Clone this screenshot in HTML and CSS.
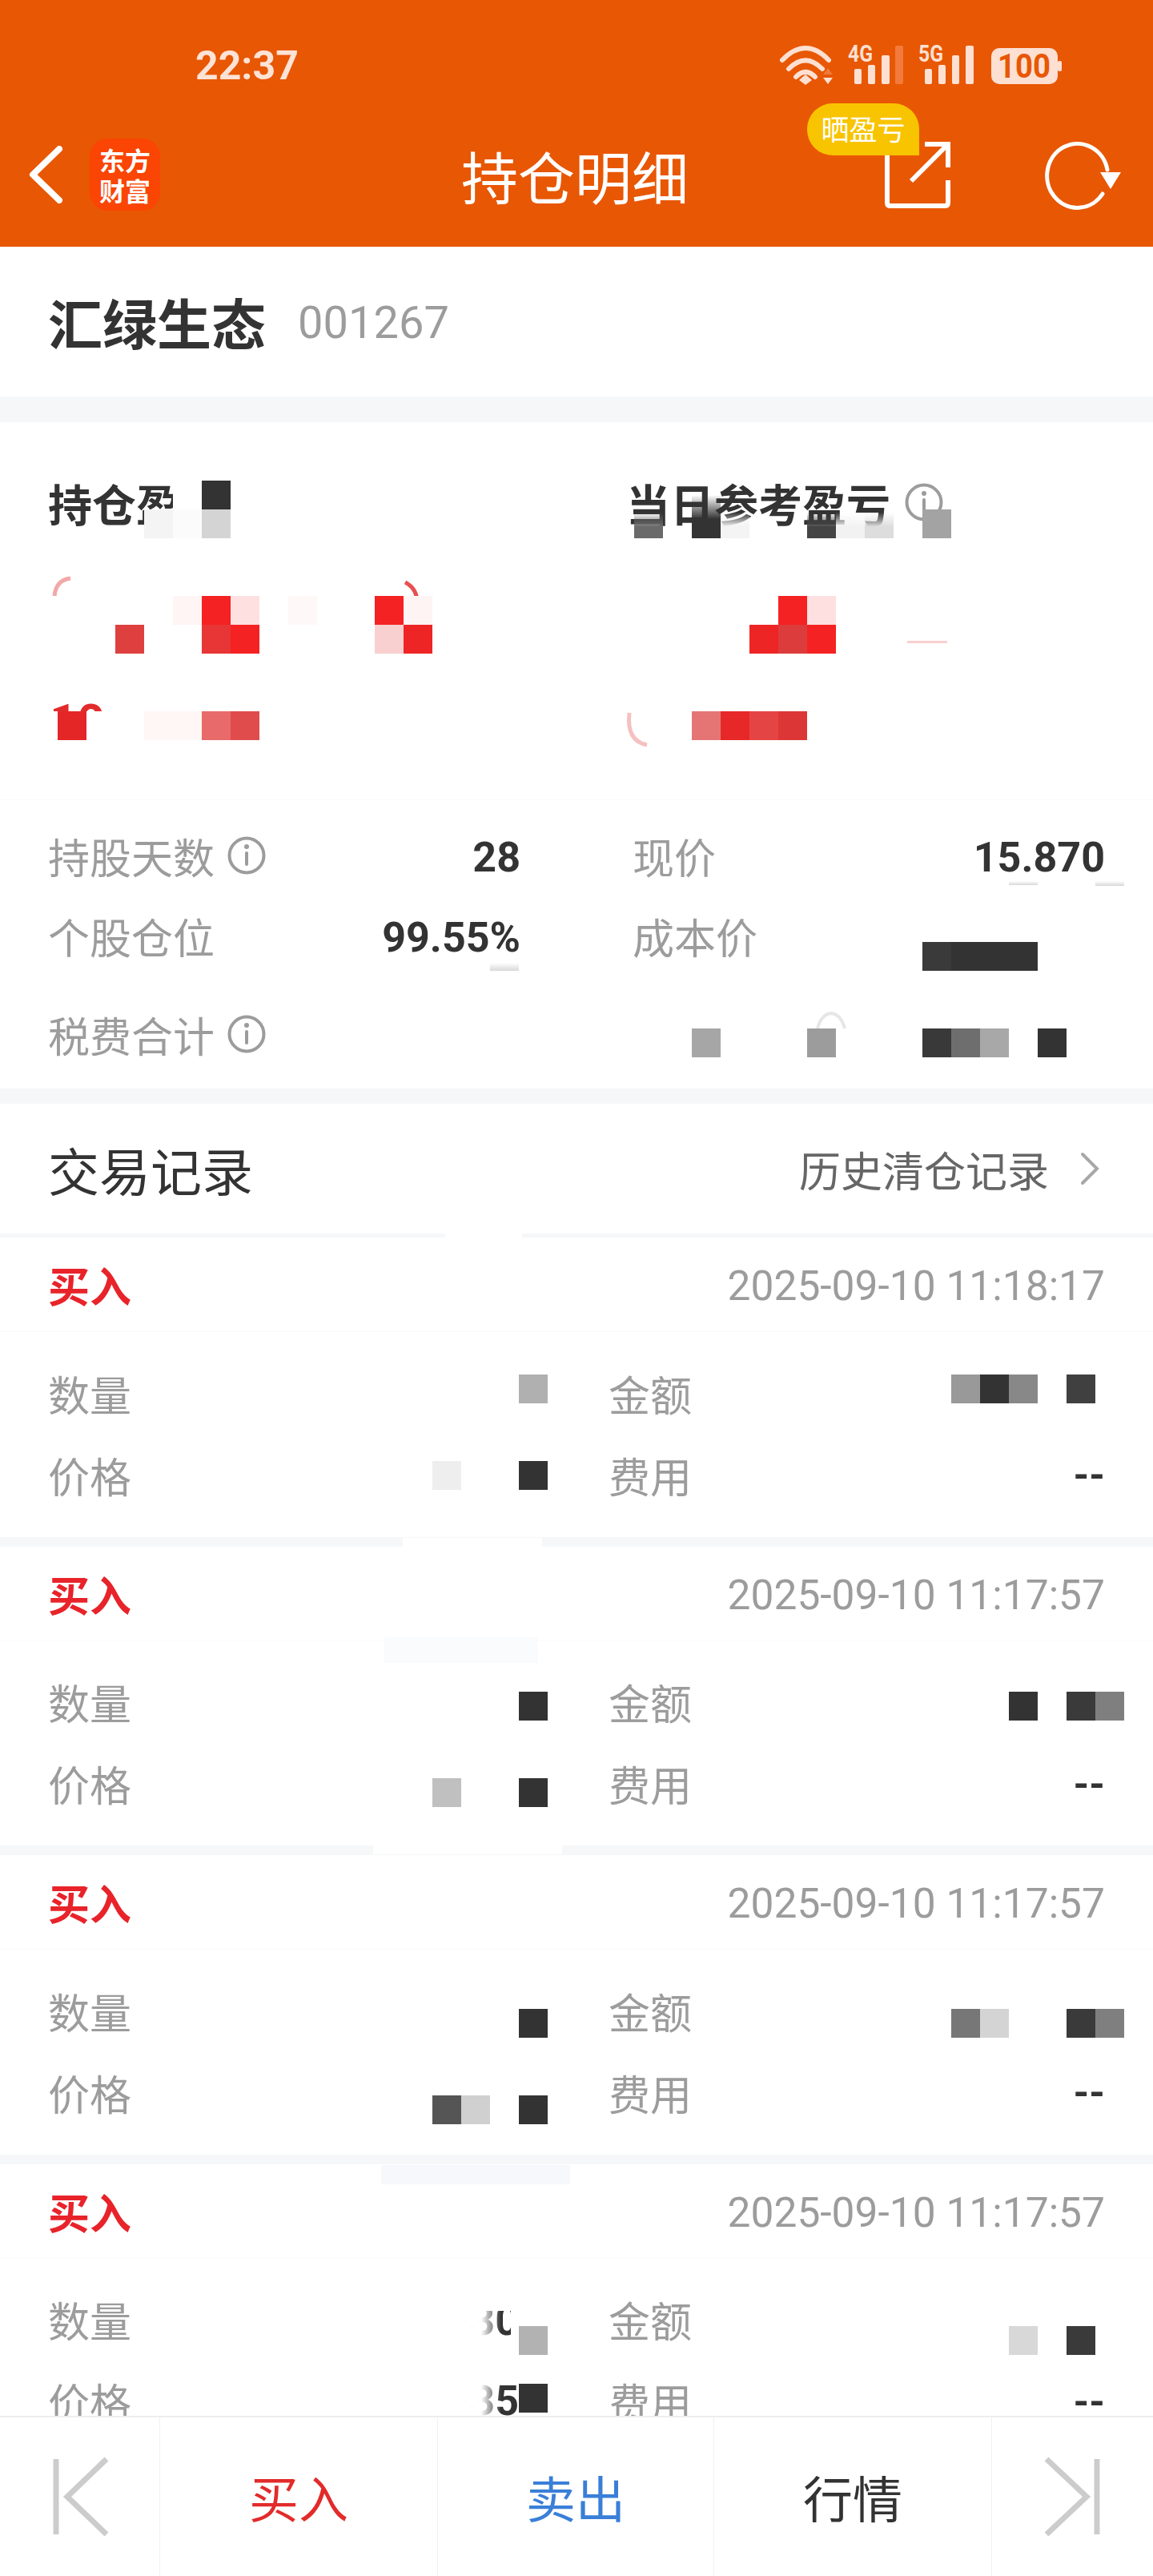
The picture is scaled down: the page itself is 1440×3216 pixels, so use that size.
FILE: index.html
```html
<!DOCTYPE html>
<html lang="zh">
<head>
<meta charset="UTF-8">
<meta name="viewport" content="width=device-width, initial-scale=1.0">
<title>持仓明细</title>
<link rel="stylesheet" href="styles.css">
</head>
<body>
<svg class="defs" width="0" height="0">
<symbol id="info" viewBox="0 0 48 48">
<circle cx="24" cy="24" r="21.5" fill="none" stroke="#9c9c9c" stroke-width="4"/>
<circle cx="24" cy="13" r="3" fill="#9c9c9c"/>
<path d="M24 21V35" stroke="#9c9c9c" stroke-width="4" stroke-linecap="round"/>
</symbol>
</svg>

<div class="phone">
<header class="topbar">
<div class="status">
<span class="time">22:37</span>
<svg class="status-icons" width="354" height="50" viewBox="0 0 354 50">
<g fill="none" stroke="#fde0d2" stroke-width="6" stroke-linecap="round">
<path d="M5 18Q34 -12 63 18"/>
<path d="M13 29Q34 8 55 29"/>
<path d="M22 39Q34 27 46 39"/>
</g>
<path d="M26 43L34 36L42 43L34 49Z" fill="#fde0d2"/>
<path d="M56 36L62 28L68 36Z" fill="#f07a3a"/>
<path d="M56 40H68L62 48Z" fill="#fde0d2"/>
<text class="net" x="87" y="20" textLength="31" lengthAdjust="spacingAndGlyphs">4G</text>
<g fill="#fde0d2">
<rect x="95" y="29" width="9" height="19" rx="2"/>
<rect x="112" y="24" width="9" height="24" rx="2"/>
<rect x="129" y="12" width="10" height="36" rx="2"/>
<rect x="146" y="0" width="10" height="48" rx="2" fill="#f27a3c"/>
</g>
<text class="net" x="175" y="20" textLength="31" lengthAdjust="spacingAndGlyphs">5G</text>
<g fill="#fde0d2">
<rect x="183" y="29" width="9" height="19" rx="2"/>
<rect x="200" y="24" width="9" height="24" rx="2"/>
<rect x="217" y="12" width="9" height="36" rx="2"/>
<rect x="234" y="0" width="10" height="48" rx="2"/>
<rect x="266" y="3" width="83" height="45" rx="10"/>
<rect x="349" y="19" width="5" height="13" rx="2"/>
</g>
<text class="batt" x="274" y="40" textLength="66" lengthAdjust="spacingAndGlyphs">100</text>
</svg>
</div>
<nav class="nav">
<div class="nav-left">
<svg width="42" height="72" viewBox="0 0 42 72"><path d="M38 4L5 36L38 68" fill="none" stroke="#fff" stroke-width="8" stroke-linecap="round" stroke-linejoin="round"/></svg>
<div class="logo">东方<br>财富</div>
</div>
<h1 class="nav-title">持仓明细</h1>
<div class="nav-right">
<div class="share">
<svg width="82" height="83" viewBox="0 0 82 83">
<g fill="none" stroke="#fff" stroke-width="6">
<path d="M3 10V76Q3 80 7 80H75Q79 80 79 76V48"/>
<path d="M50 3H79V32"/>
<path d="M79 3L33 49"/>
</g>
</svg>
<span class="badge">晒盈亏</span>
</div>
<svg class="refresh" width="94" height="84" viewBox="0 0 94 84">
<path d="M71 66A38 40 0 1 1 77 36" fill="none" stroke="#fff" stroke-width="5" stroke-linecap="round"/>
<path d="M68 39H94L81 60Z" fill="#fff"/>
</svg>
</div>
</nav>
</header>

<main class="content">
<section class="stock">
<span class="stock-name">汇绿生态</span>
<span class="stock-code">001267</span>
</section>

<section class="summary">
<div class="pnl">
<div class="pnl-title">持仓盈亏</div>
<div class="pnl-title pnl-title-right">当日参考盈亏 <svg class="info"><use href="#info"/></svg></div>
</div>
<div class="stats">
<div class="stat"><span class="stat-label">持股天数 <svg class="info"><use href="#info"/></svg></span><span class="stat-value">28</span></div>
<div class="stat stat-right"><span class="stat-label">现价</span><span class="stat-value">15.870</span></div>
<div class="stat"><span class="stat-label">个股仓位</span><span class="stat-value">99.55%</span></div>
<div class="stat stat-right"><span class="stat-label">成本价</span></div>
<div class="stat stat-tax"><span class="stat-label">税费合计 <svg class="info"><use href="#info"/></svg></span></div>
<div class="stat stat-right stat-tax"></div>
</div>
</section>

<section class="trade-head">
<span class="trade-title">交易记录</span>
<span class="trade-link">历史清仓记录
<svg width="26" height="42" viewBox="0 0 26 42"><path d="M4 3L22 21L4 39" fill="none" stroke="#a8a8a8" stroke-width="4" stroke-linecap="round"/></svg>
</span>
</section>

<section class="record">
<div class="record-head"><span class="record-type">买入</span><span class="record-time">2025-09-10 11:18:17</span></div>
<div class="record-body">
<div class="cell"><span class="cell-label">数量</span></div>
<div class="cell"><span class="cell-label cell-label-right">金额</span></div>
<div class="cell"><span class="cell-label">价格</span></div>
<div class="cell"><span class="cell-label cell-label-right">费用</span><span class="cell-value">--</span></div>
</div>
</section>
<section class="record">
<div class="record-head"><span class="record-type">买入</span><span class="record-time">2025-09-10 11:17:57</span></div>
<div class="record-body">
<div class="cell"><span class="cell-label">数量</span></div>
<div class="cell"><span class="cell-label cell-label-right">金额</span></div>
<div class="cell"><span class="cell-label">价格</span></div>
<div class="cell"><span class="cell-label cell-label-right">费用</span><span class="cell-value">--</span></div>
</div>
</section>
<section class="record">
<div class="record-head"><span class="record-type">买入</span><span class="record-time">2025-09-10 11:17:57</span></div>
<div class="record-body">
<div class="cell"><span class="cell-label">数量</span></div>
<div class="cell"><span class="cell-label cell-label-right">金额</span></div>
<div class="cell"><span class="cell-label">价格</span></div>
<div class="cell"><span class="cell-label cell-label-right">费用</span><span class="cell-value">--</span></div>
</div>
</section>
<section class="record">
<div class="record-head"><span class="record-type">买入</span><span class="record-time">2025-09-10 11:17:57</span></div>
<div class="record-body">
<div class="cell"><span class="cell-label">数量</span></div>
<div class="cell"><span class="cell-label cell-label-right">金额</span></div>
<div class="cell"><span class="cell-label">价格</span></div>
<div class="cell"><span class="cell-label cell-label-right">费用</span><span class="cell-value">--</span></div>
</div>
</section>
</main>

<!-- mosaic blocks and white patches that hide the amounts -->
<svg class="mosaic" width="1440" height="3216" viewBox="0 0 1440 3216">
<defs>
<linearGradient id="fadeUp" x1="0" y1="1" x2="0" y2="0"><stop offset="0" stop-color="#d8d8d8"/><stop offset="1" stop-color="#fff"/></linearGradient>
<linearGradient id="fadeRight" x1="0" y1="0" x2="1" y2="0"><stop offset="0.3" stop-color="#fff"/><stop offset="1" stop-color="#fff" stop-opacity="0"/></linearGradient>
<linearGradient id="softGrad" x1="0" y1="0" x2="0" y2="1"><stop offset="0.1" stop-color="#000"/><stop offset="0.6" stop-color="#fff"/></linearGradient>
<mask id="soft" maskContentUnits="objectBoundingBox"><rect width="1" height="1" fill="url(#softGrad)"/></mask>
</defs>

<!-- 持仓盈亏 -->
<rect x="216" y="596" width="36" height="40" fill="#fff"/>
<rect x="252" y="600" width="36" height="36" fill="#333"/>
<rect x="180" y="636" width="36" height="36" fill="#f4f4f4"/>
<rect x="216" y="636" width="36" height="36" fill="#fbfbfb"/>
<rect x="252" y="636" width="36" height="36" fill="#d4d4d4"/>
<path d="M68 744Q70 724 88 722" fill="none" stroke="#f2a8a8" stroke-width="5"/>
<path d="M506 727Q522 735 521 755" fill="none" stroke="#e85050" stroke-width="5"/>
<rect x="216" y="744" width="36" height="36" fill="#fff5f5"/>
<rect x="252" y="744" width="36" height="36" fill="#f42222"/>
<rect x="288" y="744" width="36" height="36" fill="#ffe0e0"/>
<rect x="360" y="744" width="36" height="36" fill="#fff8f8"/>
<rect x="468" y="744" width="36" height="36" fill="#f42222"/>
<rect x="504" y="744" width="36" height="36" fill="#fff4f4"/>
<rect x="144" y="780" width="36" height="36" fill="#de4040"/>
<rect x="252" y="780" width="36" height="36" fill="#e83535"/>
<rect x="288" y="780" width="36" height="36" fill="#f42222"/>
<rect x="468" y="780" width="36" height="36" fill="#f8d0d0"/>
<rect x="504" y="780" width="36" height="36" fill="#ee2525"/>
<text class="frag frag-red" x="62" y="921">10</text>
<rect x="60" y="888" width="170" height="44" fill="#fff"/>
<rect x="72" y="888" width="36" height="36" fill="#e52626"/>
<rect x="180" y="888" width="72" height="36" fill="#fff6f6"/>
<rect x="252" y="888" width="36" height="36" fill="#e86a6a"/>
<rect x="288" y="888" width="36" height="36" fill="#e04c4c"/>

<!-- 当日参考盈亏 -->
<rect x="792" y="636" width="36" height="36" fill="#6a6a6a" mask="url(#soft)"/>
<rect x="864" y="612" width="36" height="60" fill="#333" mask="url(#soft)"/>
<rect x="900" y="636" width="36" height="36" fill="#f4f4f4" mask="url(#soft)"/>
<rect x="1008" y="636" width="36" height="36" fill="#444" mask="url(#soft)"/>
<rect x="1044" y="636" width="36" height="36" fill="#f2f2f2" mask="url(#soft)"/>
<rect x="1080" y="636" width="36" height="36" fill="#ddd" mask="url(#soft)"/>
<rect x="1152" y="636" width="36" height="36" fill="#a3a3a3"/>
<rect x="972" y="744" width="36" height="36" fill="#f42222"/>
<rect x="1008" y="744" width="36" height="36" fill="#ffe0e0"/>
<rect x="936" y="780" width="36" height="36" fill="#ee2525"/>
<rect x="972" y="780" width="36" height="36" fill="#dd3c3c"/>
<rect x="1008" y="780" width="36" height="36" fill="#f42222"/>
<rect x="1133" y="800" width="50" height="3" fill="#f8d0d0"/>
<path d="M786 890Q782 925 808 930" fill="none" stroke="#f6c0c0" stroke-width="5"/>
<rect x="864" y="888" width="36" height="36" fill="#e57575"/>
<rect x="900" y="888" width="36" height="36" fill="#e62828"/>
<rect x="936" y="888" width="36" height="36" fill="#e54444"/>
<rect x="972" y="888" width="36" height="36" fill="#dc3636"/>

<!-- stats -->
<rect x="612" y="1202" width="36" height="10" fill="url(#fadeUp)"/>
<rect x="1260" y="1100" width="36" height="5" fill="url(#fadeUp)"/>
<rect x="1368" y="1100" width="36" height="6" fill="url(#fadeUp)"/>
<rect x="1152" y="1176" width="36" height="36" fill="#3a3a3a"/>
<rect x="1188" y="1176" width="108" height="36" fill="#333"/>
<path d="M1021 1284Q1026 1266 1038 1265Q1050 1266 1055 1284" fill="none" stroke="#e6e6e6" stroke-width="4"/>
<rect x="864" y="1284" width="36" height="36" fill="#a6a6a6"/>
<rect x="1008" y="1284" width="36" height="36" fill="#9c9c9c"/>
<rect x="1152" y="1284" width="36" height="36" fill="#393939"/>
<rect x="1188" y="1284" width="36" height="36" fill="#6e6e6e"/>
<rect x="1224" y="1284" width="36" height="36" fill="#a8a8a8"/>
<rect x="1296" y="1284" width="36" height="36" fill="#333"/>

<!-- gaps in the grey lines -->
<rect x="556" y="1540" width="96" height="5" fill="#fff"/>
<rect x="542" y="1664" width="156" height="3" fill="#fff"/>
<rect x="503" y="1920" width="174" height="12" fill="#fff"/>
<rect x="466" y="2304" width="236" height="11" fill="#fff"/>
<rect x="466" y="2434" width="230" height="3" fill="#fff"/>
<rect x="480" y="2044" width="192" height="32" fill="#fafbfd"/>
<rect x="476" y="2703" width="236" height="24" fill="#f7f8fb"/>

<!-- record 1 -->
<rect x="648" y="1716" width="36" height="36" fill="#b0b0b0"/>
<rect x="1188" y="1716" width="36" height="36" fill="#999"/>
<rect x="1224" y="1716" width="36" height="36" fill="#333"/>
<rect x="1260" y="1716" width="36" height="36" fill="#888"/>
<rect x="1332" y="1716" width="36" height="36" fill="#404040"/>
<text class="frag frag-light" x="534" y="1860">1</text>
<rect x="505" y="1820" width="20" height="44" fill="#fff"/>
<rect x="540" y="1824" width="36" height="36" fill="#eee"/>
<rect x="648" y="1824" width="36" height="36" fill="#333"/>

<!-- record 2 -->
<rect x="648" y="2112" width="36" height="36" fill="#333"/>
<rect x="1260" y="2112" width="36" height="36" fill="#333"/>
<rect x="1332" y="2112" width="36" height="36" fill="#3a3a3a"/>
<rect x="1368" y="2112" width="36" height="36" fill="#7f7f7f"/>
<rect x="540" y="2220" width="36" height="36" fill="#c0c0c0"/>
<rect x="648" y="2220" width="36" height="36" fill="#333"/>

<!-- record 3 -->
<rect x="648" y="2508" width="36" height="36" fill="#333"/>
<rect x="1188" y="2508" width="36" height="36" fill="#777"/>
<rect x="1224" y="2508" width="36" height="36" fill="#d4d4d4"/>
<rect x="1332" y="2508" width="36" height="36" fill="#3a3a3a"/>
<rect x="1368" y="2508" width="36" height="36" fill="#7f7f7f"/>
<rect x="540" y="2616" width="36" height="36" fill="#555"/>
<rect x="576" y="2616" width="36" height="36" fill="#d0d0d0"/>
<rect x="648" y="2616" width="36" height="36" fill="#333"/>

<!-- record 4 -->
<text class="frag" x="648" y="2915">30</text>
<rect x="590" y="2870" width="60" height="15" fill="#fff"/>
<rect x="590" y="2880" width="36" height="40" fill="url(#fadeRight)"/>
<rect x="638" y="2880" width="10" height="40" fill="#fff"/>
<rect x="648" y="2904" width="36" height="36" fill="#b2b2b2"/>
<rect x="1260" y="2904" width="36" height="36" fill="#d8d8d8"/>
<rect x="1332" y="2904" width="36" height="36" fill="#3a3a3a"/>
<text class="frag" x="648" y="3015">35</text>
<rect x="590" y="2972" width="36" height="44" fill="url(#fadeRight)"/>
<rect x="648" y="2976" width="36" height="36" fill="#333"/>
</svg>

<footer class="actions">
<div class="action">
<svg width="80" height="100" viewBox="0 0 80 100"><path d="M10 3V97" stroke="#ccc" stroke-width="7"/><path d="M73 3L24 50L73 97" fill="none" stroke="#ccc" stroke-width="7"/></svg>
</div>
<div class="action action-buy">买入</div>
<div class="action action-sell">卖出</div>
<div class="action action-quote">行情</div>
<div class="action">
<svg width="80" height="100" viewBox="0 0 80 100"><path d="M70 3V97" stroke="#ccc" stroke-width="7"/><path d="M7 3L57 50L7 97" fill="none" stroke="#ccc" stroke-width="7"/></svg>
</div>
</footer>
</div>
</body>
</html>
```

FILE: styles.css
```css
* {
box-sizing: border-box;
}

body {
margin: 0;
background: #fff;
font-family: Roboto, "Noto Sans CJK SC", sans-serif;
color: #333;
}

.defs {
position: absolute;
}

.phone {
position: relative;
width: 1440px;
height: 3216px;
display: flex;
flex-direction: column;
overflow: hidden;
}

/* top orange bar */
.topbar {
flex: none;
height: 308px;
background: #e85703;
color: #fff;
}

.status {
height: 128px;
padding: 36px 114px 0 244px;
display: flex;
align-items: center;
justify-content: space-between;
}

.time {
font-size: 50px;
font-weight: 700;
color: #fde3d6;
}

.status-icons {
overflow: visible;
}

.net {
font-family: Roboto, sans-serif;
font-size: 30px;
font-weight: 700;
fill: #fde0d2;
}

.batt {
font-family: Roboto, sans-serif;
font-size: 42px;
font-weight: 700;
fill: #e85703;
}

.nav {
height: 180px;
padding: 0 40px 0 36px;
display: grid;
grid-template-columns: 1fr auto 1fr;
align-items: center;
}

.nav-left {
display: flex;
align-items: center;
gap: 34px;
}

.logo {
width: 88px;
height: 90px;
border-radius: 22px;
background: #fa4504;
font-family: "Noto Sans CJK SC", sans-serif;
font-size: 32px;
font-weight: 700;
line-height: 38px;
text-align: center;
padding-top: 7px;
}

.nav-title {
margin: 0;
font-family: "Noto Sans CJK SC", sans-serif;
font-size: 71px;
font-weight: 400;
line-height: 80px;
}

.nav-right {
display: flex;
align-items: center;
justify-content: flex-end;
gap: 119px;
}

.refresh {
overflow: visible;
}

.share {
position: relative;
width: 82px;
height: 83px;
}

.badge {
position: absolute;
left: -97px;
top: -48px;
width: 140px;
height: 65px;
border-radius: 32px 32px 0 32px;
background: #f8c400;
font-size: 35px;
line-height: 70px;
text-align: center;
}

/* stock name row */
.content {
flex: 1;
min-height: 0;
overflow: hidden;
}

.stock {
height: 187px;
padding: 0 60px;
display: flex;
align-items: center;
gap: 40px;
border-bottom: 32px solid #f6f7f9;
box-sizing: content-box;
}

.stock-name {
font-size: 68px;
font-weight: 700;
}

.stock-code {
font-size: 56px;
color: #9c9c9c;
margin-top: 2px;
}

/* holding summary */
.summary {
border-bottom: 19px solid #f6f7f9;
}

.pnl,
.stats {
padding: 0 60px;
display: grid;
grid-template-columns: 590px 596px;
column-gap: 134px;
}

.pnl {
height: 472px;
padding-top: 60px;
border-bottom: 1px solid #f9f9fa;
align-content: start;
}

.pnl-title {
height: 80px;
display: flex;
align-items: center;
gap: 18px;
font-size: 55px;
font-weight: 700;
}

.pnl-title-right {
margin-left: -2px;
}

.stats {
height: 360px;
padding-top: 19px;
grid-auto-rows: 100px;
}

.stat {
display: flex;
align-items: center;
justify-content: space-between;
}

.stat-right {
padding-left: 6px;
}

.stat-tax {
margin-top: 46px;
}

.stat-label {
display: flex;
align-items: center;
gap: 16px;
font-size: 52px;
color: #9c9c9c;
}

.stat-value {
font-size: 52px;
font-weight: 700;
margin-top: 4px;
}

.info {
width: 48px;
height: 48px;
flex: none;
}

/* trade records */
.trade-head {
height: 167px;
padding: 0 66px 0 60px;
display: flex;
align-items: center;
justify-content: space-between;
border-bottom: 5px solid #f6f7f9;
}

.trade-title {
font-size: 64px;
}

.trade-link {
display: flex;
align-items: center;
gap: 38px;
font-size: 52px;
color: #666;
}

.record {
border-bottom: 12px solid #f6f7f9;
}

.record-head {
height: 118px;
padding: 0 60px;
display: flex;
align-items: center;
justify-content: space-between;
border-bottom: 1px solid #fafafa;
}

.record:first-of-type .record-head {
height: 121px;
}

.record:first-of-type .record-body {
height: 254px;
}

.record-type {
font-size: 52px;
font-weight: 700;
color: #e8232a;
}

.record-time {
font-size: 51.5px;
color: #9c9c9c;
margin-top: 4px;
}

.record-body {
height: 255.5px;
padding: 25px 60px 0;
display: grid;
grid-template-columns: 624px 618px;
column-gap: 78px;
grid-auto-rows: 102px;
}

.cell {
display: flex;
align-items: center;
justify-content: space-between;
}

.cell-label {
font-size: 52px;
color: #9c9c9c;
}

.cell-label-right {
margin-left: -2px;
}

.cell-value {
font-size: 50px;
font-weight: 700;
margin-top: 2px;
}

/* redaction layer */
.mosaic {
position: absolute;
left: 0;
top: 0;
}

.frag {
font-family: Roboto, sans-serif;
font-size: 52px;
font-weight: 700;
fill: #333;
text-anchor: end;
}

.frag-red {
font-size: 60px;
fill: #e22b2b;
text-anchor: start;
}

.frag-light {
fill: #c4c4c4;
}

/* bottom action bar */
.actions {
position: relative;
flex: none;
height: 200px;
display: grid;
grid-template-columns: 200px 347px 345px 347px 1fr;
border-top: 2px solid #eee;
background: #fff;
}

.action {
display: flex;
align-items: center;
justify-content: center;
border-right: 1px solid #f1f1f1;
font-size: 62px;
}

.action:last-child {
border-right: 0;
}

.action-buy {
color: #e22b2b;
}

.action-sell {
color: #3a7fd8;
}

.action-quote {
color: #333;
}
```
